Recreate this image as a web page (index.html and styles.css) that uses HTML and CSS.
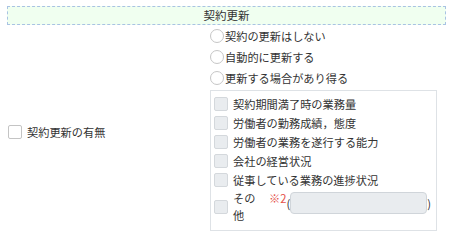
FILE: index.html
```html
<!DOCTYPE html>
<html lang="ja">
<head>
<meta charset="utf-8">
<link rel="stylesheet" href="styles.css">
</head>
<body>
<div class="page">
  <div class="section-title">契約更新</div>
  <div class="row">
    <div class="left">
      <label class="opt"><span class="cb cb-white"></span><span>契約更新の有無</span></label>
    </div>
    <div class="right">
      <label class="radio"><span class="rd"></span><span>契約の更新はしない</span></label>
      <label class="radio"><span class="rd"></span><span>自動的に更新する</span></label>
      <label class="radio"><span class="rd"></span><span>更新する場合があり得る</span></label>
      <div class="group">
        <label class="item"><span class="cb"></span><span>契約期間満了時の業務量</span></label>
        <label class="item"><span class="cb"></span><span>労働者の勤務成績，態度</span></label>
        <label class="item"><span class="cb"></span><span>労働者の業務を遂行する能力</span></label>
        <label class="item"><span class="cb"></span><span>会社の経営状況</span></label>
        <label class="item"><span class="cb"></span><span>従事している業務の進捗状況</span></label>
        <div class="item other">
          <span class="cb"></span>
          <span class="other-label">その他</span>
          <span class="note">※2</span>
          <span class="paren">(</span>
          <span class="field"></span>
          <span class="paren">)</span>
        </div>
      </div>
    </div>
  </div>
</div>
</body>
</html>
```

FILE: styles.css
```css
* { box-sizing: border-box; }
body {
  margin: 0;
  background: #fff;
  font-family: "Noto Sans CJK JP", "Noto Sans", sans-serif;
  font-size: 11.2px;
  color: #333;
}
.page {
  padding: 6px 5px 0 7px;
}
.section-title {
  width: 439px;
  height: 19px;
  border: 1px dashed #a9c3e3;
  background: #f0fff0;
  text-align: center;
  line-height: 17px;
  font-size: 11.5px;
}
.row {
  display: flex;
  align-items: center;
}
.left {
  width: 203px;
  padding-top: 8px;
  padding-left: 1px;
}
.opt {
  display: flex;
  align-items: center;
  gap: 5px;
}
.cb {
  display: inline-block;
  flex: none;
  width: 14px;
  height: 14px;
  border: 1px solid #d4d8dc;
  border-radius: 2px;
  background: #e9ecef;
}
.cb-white {
  background: #fff;
  border-color: #c4c4c4;
}
.right {
  width: 228px;
  display: flex;
  flex-direction: column;
}
.radio {
  display: flex;
  align-items: center;
  height: 21px;
  gap: 1px;
}
.rd {
  display: inline-block;
  width: 14px;
  height: 14px;
  border: 1px solid #c6c6c6;
  border-radius: 50%;
  background: #fff;
}
.group {
  margin-top: 2px;
  width: 227px;
  border: 1px solid #dee2e6;
  padding: 3px 3px 6px 3px;
}
.item {
  display: flex;
  align-items: center;
  height: 19px;
  gap: 5px;
  white-space: nowrap;
}
.other {
  height: auto;
  align-items: flex-start;
  gap: 0;
  margin-top: 1px;
  white-space: normal;
}
.other .cb {
  align-self: center;
  margin-right: 5px;
}
.other-label {
  width: 28px;
  line-height: 17px;
}
.note {
  color: #e5534b;
  margin-left: 8px;
  line-height: 17px;
}
.paren {
  line-height: 22px;
  margin-top: 2px;
}
.field {
  width: 137px;
  height: 22px;
  margin-top: 2px;
  border: 1px solid #d0d5da;
  border-radius: 4px;
  background: #e9ecef;
}
```
